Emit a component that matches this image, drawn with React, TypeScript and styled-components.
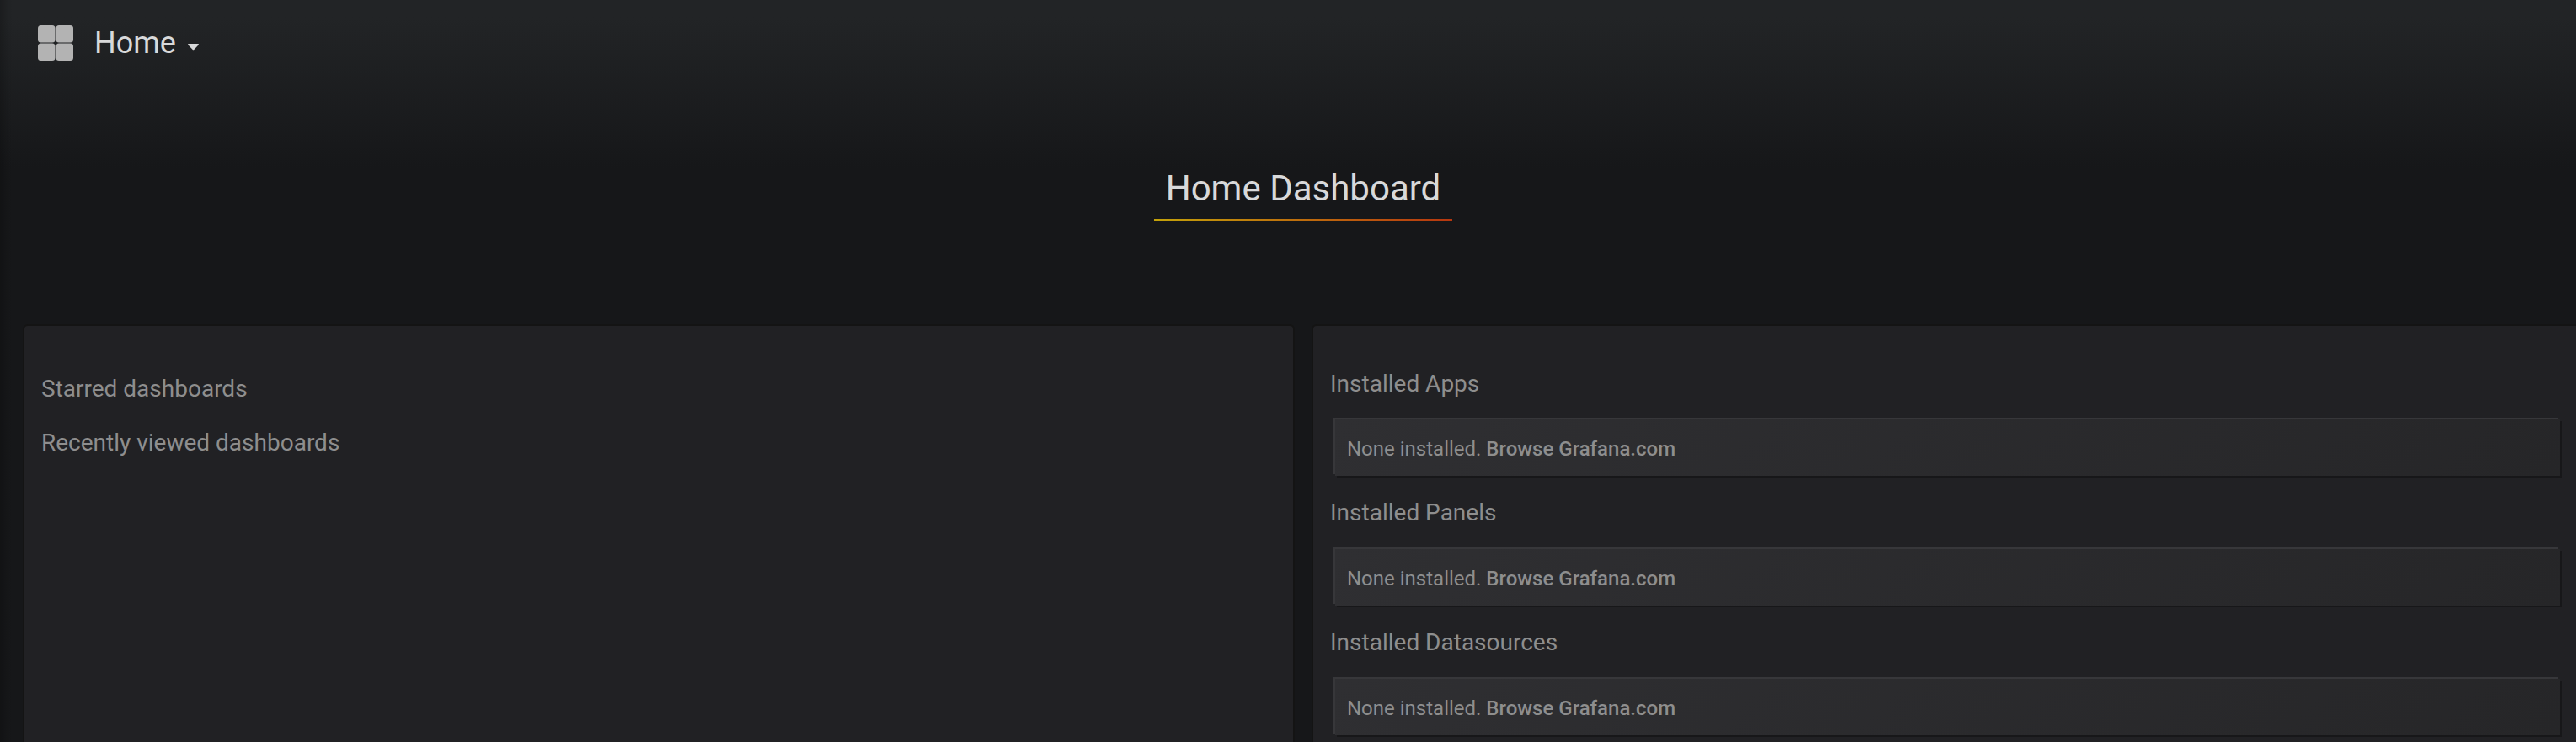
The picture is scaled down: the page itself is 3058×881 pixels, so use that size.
import React from "react";
import styled, { createGlobalStyle } from "styled-components";

const GlobalStyle = createGlobalStyle`
  *, *::before, *::after { box-sizing: border-box; }
  html { background: #161719; }
  body { margin: 0; overflow: hidden; font-family: Roboto, "Liberation Sans", sans-serif; }
`;

const Page = styled.div`
  height: 881px;
  overflow: hidden;
  display: flex;
  flex-direction: column;
  color: #8e8e8e;
  background:
    linear-gradient(90deg, rgba(0, 0, 0, 0.2), rgba(0, 0, 0, 0.04) 10px, transparent 16px),
    linear-gradient(180deg, #222426 20px, #161719 200px) #161719;
`;

const Navbar = styled.header`
  display: flex;
  flex: none;
  align-items: center;
  height: 104px;
  padding-left: 45px;
`;

const DashboardIcon = styled.svg`
  display: block;
  width: 42px;
  height: 42px;
  margin-top: -2px;
  fill: #b3b3b3;
`;

const NavTitle = styled.a`
  display: flex;
  align-items: center;
  margin-left: 25px;
  margin-top: -2px;
  color: #d8d9da;
  font-size: 36px;
  line-height: 54px;
`;

const Caret = styled.svg`
  width: 13px;
  height: 8px;
  margin: 10px 0 0 14px;
  fill: #d8d9da;
`;

const Hero = styled.section`
  display: flex;
  flex: none;
  justify-content: center;
  align-items: flex-start;
  height: 283px;
  padding: 84px 0 0 36px;
`;

const HeroTitle = styled.h1`
  width: 354px;
  height: 74px;
  margin: 0;
  padding-bottom: 2px;
  text-align: center;
  color: #d8d9da;
  font-size: 42px;
  font-weight: 400;
  line-height: 71px;
  background: linear-gradient(90deg, #c4a20a, #b7370f) bottom / 100% 2px no-repeat;
`;

const Panels = styled.main`
  flex: 1;
  display: flex;
  gap: 24px;
  padding-left: 29px;
  width: 3089px;
`;

const Panel = styled.section<{ $top: number }>`
  flex: 0 0 1506px;
  padding: ${(p) => p.$top}px 20px 0;
  background: #212124;
  border-radius: 4px 4px 0 0;
  box-shadow: 0 0 0 2px #141414;
`;

const Heading = styled.h2<{ $gap: number }>`
  margin: 0 0 ${(p) => p.$gap}px;
  color: #8e8e8e;
  font-size: 28px;
  font-weight: 400;
  line-height: 41px;
`;

const Card = styled.div`
  display: flex;
  align-items: center;
  width: 1454px;
  height: 67px;
  margin: 0 0 23px 6px;
  padding: 2px 0 0 14px;
  font-size: 24px;
  line-height: 36px;
  white-space: pre;
  background: linear-gradient(135deg, #2f2f32, #262628);
  box-shadow: -2px -2px 0 0 rgba(255, 255, 255, 0.1), 2px 2px 0 0 rgba(0, 0, 0, 0.3);
`;

const BrowseLink = styled.a`
  font-weight: 500;
`;

const plugins = ["Installed Apps", "Installed Panels", "Installed Datasources"];

export default function App() {
  return (
    <>
      <GlobalStyle />
      <Page>
        <Navbar>
          <DashboardIcon viewBox="0 0 42 42">
            <rect width="20.5" height="20.5" rx="3.5" />
            <rect x="21.5" width="20.5" height="20.5" rx="3.5" />
            <rect y="21.5" width="20.5" height="20.5" rx="3.5" />
            <rect x="21.5" y="21.5" width="20.5" height="20.5" rx="3.5" />
          </DashboardIcon>
          <NavTitle>
            Home
            <Caret viewBox="0 0 13 8">
              <path d="M.5 0h12l.5 1-6 6.3h-1L0 1z" />
            </Caret>
          </NavTitle>
        </Navbar>
        <Hero>
          <HeroTitle>Home Dashboard</HeroTitle>
        </Hero>
        <Panels>
          <Panel $top={54}>
            <Heading $gap={23}>Starred dashboards</Heading>
            <Heading $gap={23}>Recently viewed dashboards</Heading>
          </Panel>
          <Panel $top={48}>
            {plugins.map((name, i) => (
              <React.Fragment key={name}>
                <Heading $gap={i === 0 ? 22 : 23}>{name}</Heading>
                <Card>
                  None installed. <BrowseLink>Browse Grafana.com</BrowseLink>
                </Card>
              </React.Fragment>
            ))}
          </Panel>
        </Panels>
      </Page>
    </>
  );
}
